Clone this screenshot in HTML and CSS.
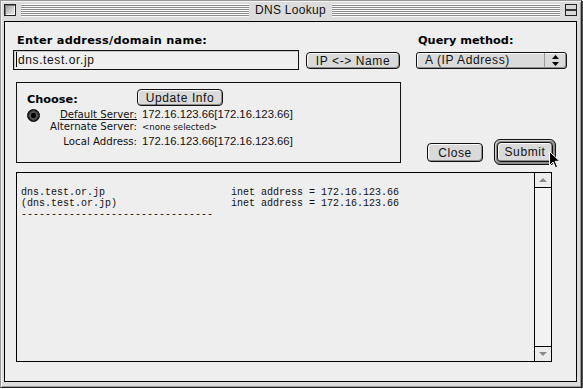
FILE: index.html
```html
<!DOCTYPE html>
<html lang="en">
<head>
    <meta charset="UTF-8">
    <meta name="viewport" content="width=device-width, initial-scale=1.0">
    <title>DNS Lookup</title>
    <link rel="stylesheet" href="styles.css">
</head>
<body>
    <div class="window">
        <div class="titlebar">
            <span class="close-box"></span>
            <span class="stripes"></span>
            <span class="title">DNS Lookup</span>
            <span class="stripes"></span>
            <span class="shade-box"></span>
        </div>
        <div class="content">
            <div class="top-row">
                <div class="address-col">
                    <div class="label">Enter address/domain name:</div>
                    <div class="field-row">
                        <div class="text-field"><span class="caret"></span>dns.test.or.jp</div>
                        <button class="btn btn-swap">IP &lt;-&gt; Name</button>
                    </div>
                </div>
                <div class="method-col">
                    <div class="label">Query method:</div>
                    <div class="popup">
                        <span class="popup-text">A (IP Address)</span>
                        <span class="popup-arrows">
                            <svg width="7" height="11" viewBox="0 0 7 11"><path d="M3.5 0 L7 4 L0 4 Z M0 7 L7 7 L3.5 11 Z" fill="#000"/></svg>
                        </span>
                    </div>
                </div>
            </div>
            <div class="mid-row">
                <div class="group">
                    <div class="group-head">
                        <span class="label choose">Choose:</span>
                        <button class="btn btn-update">Update Info</button>
                    </div>
                    <div class="server-grid">
                        <span class="radio"></span>
                        <span class="key link">Default Server:</span>
                        <span class="val">172.16.123.66[172.16.123.66]</span>
                        <span></span>
                        <span class="key">Alternate Server:</span>
                        <span class="key none">&lt;none selected&gt;</span>
                        <span></span>
                        <span class="key">Local Address:</span>
                        <span class="val">172.16.123.66[172.16.123.66]</span>
                    </div>
                </div>
                <button class="btn btn-close">Close</button>
                <div class="default-ring">
                    <button class="btn btn-submit">Submit</button>
                    <svg class="cursor" width="12" height="18" viewBox="0 0 12 18"><path d="M0.5 0.5 L0.5 14.5 L4 11 L6.5 16.8 L8.6 15.9 L6.2 10.3 L10.8 10.3 Z" fill="#000" stroke="#fff" stroke-width="1"/></svg>
                </div>
            </div>
            <div class="output">
<pre class="output-text">
dns.test.or.jp                     inet address = 172.16.123.66
(dns.test.or.jp)                   inet address = 172.16.123.66
--------------------------------</pre>
                <div class="scrollbar">
                    <div class="arrow up"><span></span></div>
                    <div class="track"></div>
                    <div class="arrow down"><span></span></div>
                </div>
            </div>
        </div>
    </div>
</body>
</html>
```

FILE: styles.css
```css
* { box-sizing: border-box; }
body { margin: 0; background: #fff; font-family: "Liberation Sans", Arial, sans-serif; font-size: 12px; }

.window { width: 582px; height: 388px; background: #dcdcdc; border: 1px solid #222; border-top-color: #999; border-left-color: #999; box-shadow: 1px 1px 0 #555, inset 1px 1px 0 #f4f4f4, inset -1px -1px 0 #9a9a9a; padding: 0 4px 5px 3px; }

.titlebar { height: 20px; display: flex; align-items: flex-start; }
.close-box, .shade-box { width: 12px; height: 12px; margin-top: 3px; border: 1px solid #222; background: linear-gradient(135deg, #9a9a9a, #f2f2f2); box-shadow: inset 1px 1px 0 #777, inset -1px -1px 0 #fff; }
.shade-box { background: #d8d8d8; box-shadow: inset 0 4px 0 #d8d8d8, inset 0 5px 0 #333, inset 0 -4px 0 #d8d8d8, inset 0 -5px 0 #333; }
.stripes { flex: 1; height: 13px; margin: 3px 5px 0; background: repeating-linear-gradient(#fafafa 0 1px, #8c8c8c 1px 2px); }
.title { line-height: 19px; padding: 0 1px; letter-spacing: 0.3px; color: #111; }

.content { width: 573px; height: 361px; border: 1px solid #000; background: #eeeeee; padding: 10px 0 0 11px; }

.label { font-family: "DejaVu Sans", sans-serif; font-weight: bold; font-size: 11.3px; line-height: 18px; color: #000; }
.btn { font-family: "Liberation Sans", Arial, sans-serif; font-size: 12px; letter-spacing: 0.6px; color: #111; padding: 0; border: 1px solid #111; border-radius: 4px; background: #dadada; box-shadow: inset 1px 1px 0 #fbfbfb, inset -1px -1px 0 #8e8e8e; }

.top-row { display: flex; }
.address-col { width: 385px; }
.address-col .label { margin-left: 1px; letter-spacing: 0.25px; }
.field-row { display: flex; }
.text-field { width: 286px; height: 20px; margin-left: -3px; border: 1px solid #111; background: #efefef; box-shadow: inset 1px 1px 0 #c8c8c8; padding-left: 2px; line-height: 18px; letter-spacing: 0.6px; color: #111; }
.caret { display: inline-block; width: 1px; height: 15px; background: #000; vertical-align: -3px; margin-right: 1px; }
.btn-swap { width: 94px; height: 17px; margin: 2px 0 0 7px; }

.method-col { margin-left: 15px; }
.method-col .label { margin-left: 2px; }
.popup { width: 151px; height: 17px; margin-top: 2px; display: flex; border: 1px solid #111; border-radius: 3px; background: #dadada; box-shadow: inset 1px 1px 0 #fbfbfb, inset -1px -1px 0 #8e8e8e; }
.popup-text { flex: 1; padding-left: 8px; line-height: 15px; letter-spacing: 0.6px; color: #111; }
.popup-arrows { width: 22px; border-left: 1px solid #9a9a9a; display: flex; align-items: center; justify-content: center; }

.mid-row { display: flex; align-items: flex-start; height: 81px; margin-top: 12px; }
.group { width: 385px; height: 81px; border: 1px solid #111; padding: 5px 0 0 10px; }
.group-head { display: flex; height: 18px; }
.choose { width: 110px; padding-top: 3px; }
.btn-update { width: 86px; height: 17px; margin-top: 1px; }

.server-grid { display: grid; grid-template-columns: 14px 91px 170px; grid-template-rows: 13px 14px 15px; column-gap: 5px; align-items: baseline; margin-top: 2px; }
.radio { width: 13px; height: 13px; border-radius: 50%; border: 1px solid #000; background: radial-gradient(circle at 50% 50%, #000 0 2.5px, #555 3px 4px, #2a2a2a 4.5px); align-self: start; margin-top: 1px; }
.key { font-family: "DejaVu Sans", sans-serif; font-size: 10.2px; color: #111; justify-self: end; white-space: nowrap; }
.key.link { text-decoration: underline; }
.key.none { justify-self: start; font-size: 8.6px; }
.val { font-size: 11.3px; color: #111; white-space: nowrap; }

.btn-close { width: 56px; height: 19px; margin: 61px 0 0 26px; }
.default-ring { position: relative; width: 62px; height: 26px; margin: 57px 0 0 11px; padding: 2px; border: 1px solid #111; border-radius: 6px; background: #8e8e8e; box-shadow: inset 1px 1px 0 #d0d0d0; }
.btn-submit { width: 56px; height: 20px; display: block; }
.cursor { position: absolute; left: 54px; top: 11px; }

.output { display: flex; width: 536px; height: 190px; margin-top: 9px; border: 1px solid #000; }
.output-text { flex: 1; margin: 0; padding: 14px 0 0 4px; font-family: "Liberation Mono", monospace; font-size: 10px; line-height: 11px; color: #111; }
.scrollbar { width: 17px; border-left: 1px solid #000; display: flex; flex-direction: column; background: #f2f2f2; }
.arrow { height: 15px; display: flex; align-items: center; justify-content: center; background: #ececec; }
.arrow.up { border-bottom: 1px solid #000; }
.arrow.down { border-top: 1px solid #000; }
.arrow span { width: 0; height: 0; border-left: 4px solid transparent; border-right: 4px solid transparent; }
.arrow.up span { border-bottom: 4px solid #8a8a8a; }
.arrow.down span { border-top: 4px solid #8a8a8a; }
.track { flex: 1; }
```
